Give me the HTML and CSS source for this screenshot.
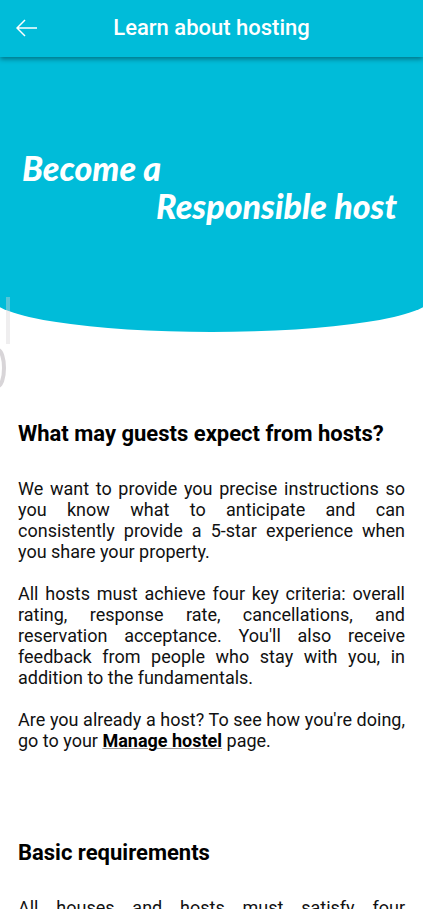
FILE: index.html
```html
<!DOCTYPE html>
<html lang="en">
<head>
  <meta charset="utf-8">
  <meta name="viewport" content="width=device-width, initial-scale=1">
  <title>Learn about hosting</title>
  <link rel="stylesheet" href="styles.css">
</head>
<body>
  <header class="app-bar">
    <button class="back" type="button" aria-label="Back">
      <svg viewBox="0 0 22 18" width="22" height="18" aria-hidden="true">
        <path d="M21 9H1M9 1L1 9l8 8"/>
      </svg>
    </button>
    <h1 class="app-title">Learn about hosting</h1>
  </header>
  <main>
    <section class="hero">
      <p class="hero-line">Become a</p>
      <p class="hero-line hero-line-end">Responsible host</p>
      <svg class="edge-handle" viewBox="0 0 12 92" width="12" height="92" aria-hidden="true">
        <path class="handle-bar" d="M8 0V47"/>
        <ellipse class="handle-ring" cx="-2" cy="71" rx="6" ry="18"/>
      </svg>
    </section>
    <article class="content">
      <section class="topic">
        <h2>What may guests expect from hosts?</h2>
        <p>We want to provide you precise instructions so you know what to anticipate and can consistently provide a 5-star experience when you share your property.</p>
        <p>All hosts must achieve four key criteria: overall rating, response rate, cancellations, and reservation acceptance. You'll also receive feedback from people who stay with you, in addition to the fundamentals.</p>
        <p>Are you already a host? To see how you're doing, go to your <a href="#manage">Manage hostel</a> page.</p>
      </section>
      <section class="topic">
        <h2>Basic requirements</h2>
        <p>All houses and hosts must satisfy four</p>
      </section>
    </article>
  </main>
</body>
</html>
```
FILE: styles.css
```css
* {
  box-sizing: border-box;
}

html {
  scrollbar-width: none;
}

body {
  margin: 0;
  overflow-x: hidden;
  background: #fff;
  color: #111;
  font-family: Roboto, sans-serif;
  font-size: 18px;
  line-height: 21px;
}

.app-bar {
  position: relative;
  z-index: 1;
  display: grid;
  grid-template-columns: 52px 1fr 52px;
  align-items: center;
  height: 57px;
  padding-bottom: 2px;
  background: #00bcd9;
  box-shadow: 0 2px 5px rgba(0, 0, 0, 0.4);
  color: #fff;
}

.back {
  display: flex;
  padding: 0 0 0 16px;
  border: 0;
  background: none;
}

.back path {
  fill: none;
  stroke: #fff;
  stroke-width: 1.5;
}

.app-title {
  margin: 0;
  font-size: 22px;
  font-weight: 500;
  line-height: 29px;
  text-align: center;
}

.hero {
  position: relative;
  height: 275px;
  padding: 92px 26px 0 22px;
  color: #fff;
}

.hero::before {
  content: "";
  position: absolute;
  z-index: -1;
  inset: 0 -2%;
  border-radius: 0 0 50% 50% / 0 0 34px 34px;
  background: #00bcd9;
}

.hero-line {
  margin: 0;
  font-family: Forte, "Brush Script MT", Lato, sans-serif;
  font-size: 34px;
  font-style: italic;
  font-weight: 900;
  line-height: 38px;
}

.hero-line-end {
  text-align: right;
}

.edge-handle {
  position: absolute;
  top: 240px;
  left: 0;
}

.edge-handle path,
.edge-handle ellipse {
  fill: none;
  stroke: #d8d5d8;
  stroke-width: 4;
}

.edge-handle .handle-bar {
  opacity: 0.4;
}

.content {
  padding: 88px 18px 0;
}

.topic {
  margin-bottom: 88px;
}

.topic h2 {
  margin: 0 0 30px;
  color: #000;
  font-size: 22px;
  font-weight: 700;
  line-height: 28px;
}

.topic p {
  margin: 0 0 21px;
  text-align: justify;
}

.topic a {
  color: #000;
  font-weight: 700;
  text-decoration: underline #999 1px;
}

.topic:last-child p {
  text-align-last: justify;
}
```
